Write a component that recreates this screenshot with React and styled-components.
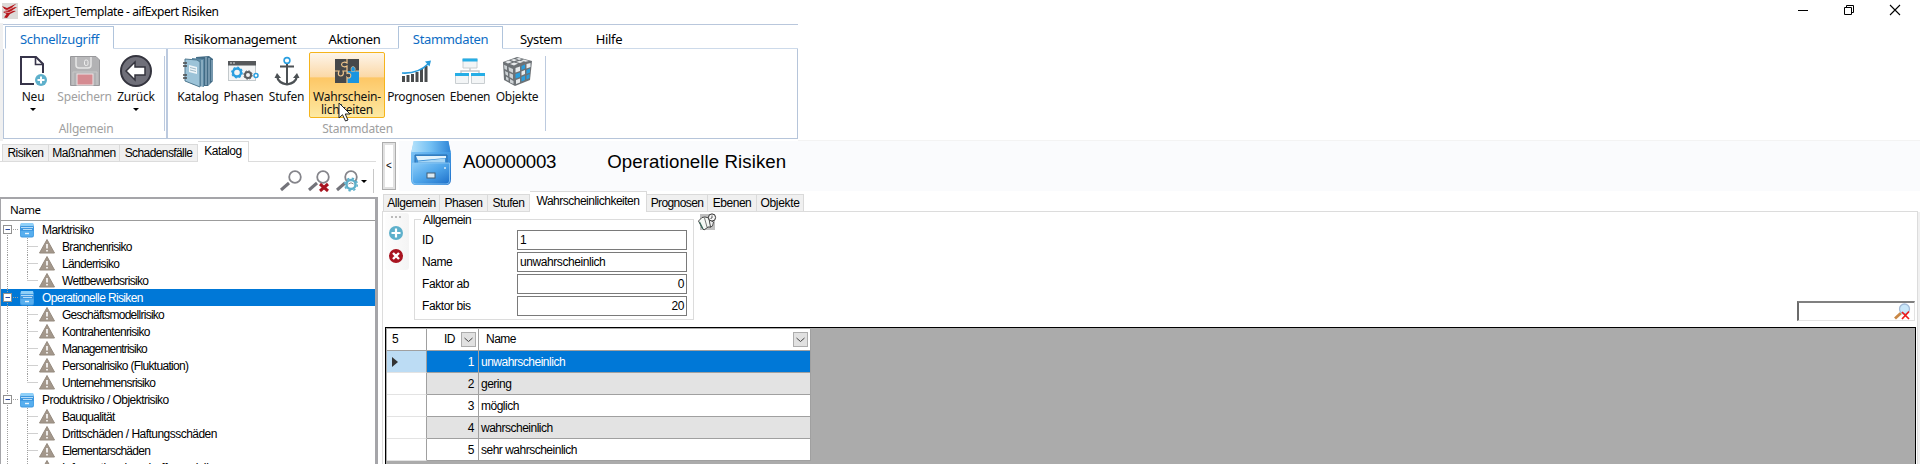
import React from 'react';
import styled, { createGlobalStyle, css } from 'styled-components';

const GlobalStyle = createGlobalStyle`
  * { box-sizing: border-box; }
  body { margin: 0; background: #fff; overflow: hidden; }
  svg { display: block; flex: none; }
`;

const UI = `'Noto Sans', 'Open Sans', sans-serif`;
const CLASSIC = `'Liberation Sans', Arial, sans-serif`;

const Window = styled.div`
  width: 1920px; height: 464px; overflow: hidden;
  display: flex; flex-direction: column;
  background: #fff; color: #000;
  font: 12px/14px ${CLASSIC};
  letter-spacing: -0.5px;
  white-space: nowrap;
`;
const TitleBar = styled.header`
  height: 23px; flex: none; display: flex; align-items: center;
  padding: 0 19px 1px 2px;
  font: 12px/16px ${UI};
`;
const Title = styled.h1`
  margin: 2px auto 0 5px; font: inherit; letter-spacing: -0.42px;
`;
const WindowButtons = styled.div`
  display: flex; gap: 34px; margin-top: -2px;
`;

/* Ribbon */
const Ribbon = styled.section`
  height: 118px; flex: none; width: 798px; position: relative;
  padding-left: 3px; background: linear-gradient(90deg, #f0f0f0 3px, #fff 3px);
  font: 13px/16px ${UI};
`;
const RibbonTabs = styled.nav`
  margin-top: 1px; height: 25px; display: flex; align-items: stretch;
  border-top: 1px solid #b9c7dc;
  padding-left: 2px;
`;
const RibbonTab = styled.div`
  width: ${p => p.$w}px; margin-top: ${p => p.$active ? 1 : 0}px;
  padding-top: ${p => p.$active ? 4 : 6}px;
  text-align: center; letter-spacing: ${p => p.$ls ?? -0.35}px;
  border-bottom: 1px solid #cddaea;
  ${p => p.$grow && css`flex: 1;`}
  ${p => p.$active && css`
    color: #0c6cc4; border: 1px solid #b0c4dc; border-bottom-color: #fff;
  `}
`;
const RibbonBody = styled.div`
  height: 90px; width: 795px; display: flex;
  border: 1px solid #b6c5da; border-top: 0;
`;
const Group = styled.div`
  width: ${p => p.$w}px; position: relative; display: flex; flex-direction: column;
  border-right: ${p => p.$divider ? '2px solid #bccadf' : '0'};
`;
const GroupItems = styled.div`
  display: flex; height: 72px; padding-left: ${p => p.$pl}px;
`;
const GroupLabel = styled.div`
  color: #a0a0a0; text-align: center; font-size: 12px; letter-spacing: -0.2px;
  padding-left: ${p => p.$pl || 0}px;
`;
const GroupRule = styled.i`
  position: absolute; right: 1px; top: 7px; height: 75px; width: 1px; background: #bccadf;
`;
const BigButton = styled.div`
  width: ${p => p.$w}px; height: 66px; margin-top: 3px;
  display: flex; flex-direction: column; align-items: center;
  font-size: 12px; line-height: 13px; text-align: center;
  letter-spacing: ${p => p.$ls ?? -0.2}px;
  color: ${p => p.$disabled ? '#a0a0a0' : '#101010'};
  border: 1px solid transparent;
  ${p => p.$hot && css`
    border-color: #f5b41c; border-radius: 2px;
    background: linear-gradient(#fdf5ea 0, #fbd9a8 37%, #fdc766 39%, #fde9a2 100%);
  `}
`;
const IconBox = styled.div`
  height: 34px; display: flex; align-items: center; justify-content: center; margin: 1px 0 2px;
`;
const Caret = styled.i`
  width: 0; height: 0; margin-top: ${p => p.$mt || 0}px;
  border: 3px solid transparent; border-top: 3px solid #000; border-bottom: 0;
`;
const Pointer = styled.svg`
  position: absolute; left: 338px; top: 79px;
`;

/* Work area */
const Work = styled.main`
  flex: 1; min-height: 0; display: flex; border-top: 1px solid #f3f3f3; margin-top: -1px;
`;
const Side = styled.aside`
  width: 378px; display: flex; flex-direction: column;
`;
const Tabs = styled.nav`
  display: flex; align-items: flex-end; height: 21px; flex: none;
  padding-left: ${p => p.$pl}px; border-bottom: 1px solid #dcdcdc;
  margin-right: 2px;
`;
const Tab = styled.div`
  width: ${p => p.$w}px; height: 17px; text-align: center; line-height: 17px;
  background: #f0f0f0; border: 1px solid #dadada; border-bottom: 0; border-left-width: ${p => p.$first ? 1 : 0}px;
  letter-spacing: ${p => p.$ls ?? -0.45}px;
  ${p => p.$active && css`
    height: 21px; margin-bottom: -1px; background: #fff; line-height: 18px;
  `}
`;
const SideTools = styled.div`
  height: 35px; flex: none; display: flex; align-items: center;
  margin-right: 5px; padding: 3px 0 0 280px; gap: 6px;
`;
const ToolMenu = styled.span`
  display: flex; align-items: center; gap: 6px; margin-left: -3px;
`;
const ToolEnd = styled.i`
  width: 1px; height: 24px; background: #c8c8c8;
`;
const Tree = styled.div`
  flex: 1; min-height: 0; overflow: hidden;
  border: solid #a5a5a9; border-width: 2px 3px 0 1px;
`;
const TreeHead = styled.div`
  height: 22px; padding: 3px 0 0 9px; font: 11.5px/16px ${UI};
  border-bottom: 1px solid #9c9c9c;
`;
const Node = styled.div`
  height: 17px; display: flex; align-items: center;
  background: ${p => p.$selected ? '#0078d7' : 'transparent'};
  color: ${p => p.$selected ? '#fff' : '#000'};
`;
const NodeText = styled.span`
  margin-left: ${p => p.$ml}px; padding-top: 1px; letter-spacing: ${p => p.$ls ?? -0.68}px;
`;

const Detail = styled.section`
  margin-left: 4px; width: 1538px; display: flex; flex-direction: column;
`;
const Header = styled.div`
  height: 50px; flex: none; display: flex;
  background: linear-gradient(90deg, #fff 17px, #fafbfd 17px);
  font: 18.67px/22px ${CLASSIC};
`;
const Collapse = styled.button`
  width: 14px; height: 48px; margin: 1px 15px 0 0; padding: 0;
  border: 1px solid #adadad; outline: 2px solid #e1e1e1; outline-offset: -3px;
  background: #fff; font: 10px/12px ${CLASSIC};
`;
const Heading = styled.h2`
  margin: 10px 0 0 ${p => p.$ml}px; font: inherit; letter-spacing: ${p => p.$ls}px;
`;
const Page = styled.div`
  flex: 1; min-height: 0; display: flex; flex-direction: column;
  margin-right: 2px; border: solid #dcdcdc; border-width: 0 1px;
  box-shadow: 2px 0 #f0f0f0;
`;
const Frame = styled.div`
  flex: 1; min-height: 0; display: flex; flex-direction: column;
`;
const FormArea = styled.div`
  height: 115px; flex: none; display: flex; padding-left: 2px;
`;
const Strip = styled.div`
  width: 24px; height: 57px; margin-top: 1px; border-radius: 3px;
  background: linear-gradient(90deg, #fdfdfd, #f4f4f4);
  display: flex; flex-direction: column; align-items: center; padding: 3px 3px 0 0; gap: 9px;
`;
const Grip = styled.i`
  width: 10px; height: 2px; margin-bottom: -1px;
  background: repeating-linear-gradient(90deg, #bbb 0 2px, transparent 2px 4px);
`;
const GroupBox = styled.fieldset`
  margin: 0 0 0 5px; width: 280px; height: 108px; padding: 4px 6px 0 7px;
  border: 1px solid #dcdcdc; min-width: 0;
`;
const Legend = styled.legend`
  padding: 0 2px 0 2px; margin-left: -1px; height: 14px; line-height: 16px;
`;
const Field = styled.label`
  display: flex; align-items: center; height: 20px; margin-bottom: 2px; letter-spacing: -0.42px;
`;
const FieldName = styled.span`
  flex: 1;
`;
const FieldBox = styled.span`
  width: 170px; height: 20px; border: 1px solid #7a7a7a; background: #fff; line-height: 18px;
  padding: 0 2px; text-align: ${p => p.$num ? 'right' : 'left'};
`;
const Book = styled.div`
  margin: 1px 0 0 4px;
`;
const Search = styled.div`
  margin: 89px 2px 0 auto; width: 118px; height: 20px;
  border: 2px solid #6b6b6b; border-top-color: #808080; border-right: 1px solid #e3e3e3; border-bottom: 1px solid #e3e3e3;
  display: flex; justify-content: flex-end; padding-right: 3px;
`;
const GridArea = styled.div`
  flex: 1; min-height: 0; margin: 0 1px 0 2px; background: #ababab;
  border: solid #000; border-width: 1px 1px 0 1px; padding: 1px 0 0 1px;
`;
const Row = styled.div`
  display: grid; grid-template-columns: 40px 52px 332px; width: 424px; height: 22px; line-height: 23px;
  grid-template-rows: 22px;
  background: ${p => p.$head || !p.$alt ? '#fff' : '#e3e3e3'};
  ${p => p.$selected && css`background: #0078d7; color: #fff;`}
`;
const Cell = styled.div`
  border: solid #a0a0a0; border-width: 0 1px 1px 0; padding: 0 ${p => p.$num ? 4 : 2}px 0 2px;
  text-align: ${p => p.$num ? 'right' : 'left'};
  ${p => p.$head && css`display: flex; align-items: center; padding: 0 2px 0 ${p.$num ? 17 : 7}px; justify-content: space-between;`}
`;
const RowHead = styled.div`
  background: ${p => p.$selected ? '#bcdcf4' : '#fff'};
  border: solid #a0a0a0; border-width: 0 1px 1px 0; border-bottom-color: ${p => p.$head ? '#a0a0a0' : '#e3e3e3'};
  padding-left: 5px; display: flex; align-items: center;
`;
const Filter = styled.span`
  width: 15px; height: 15px; background: #e1e1e1; border: 1px solid #adadad;
  display: flex; align-items: center; justify-content: center;
`;

/* Drawings */
const Logo = () => (
  <svg width="16" height="16" viewBox="0 0 16 16"><rect width="16" height="16" fill="#dcdad8" />
    <path d="M0 3 5 5 14.500 .5 10 4.500 15 4 10 7.500 14 8 8 11 5 15 2 14.500 4.500 11 1 9 4 8Z" fill="#b5161c" />
    <path d="M0 5.500 5 7.500 12 4M3 9 7 9.500 12 7" stroke="#f3dcdc" strokeWidth=".7" fill="none" /></svg>
);
const NewIcon = () => (
  <svg width="29" height="32" viewBox="0 0 29 32"><path d="M24 18V9L17 2H2V29H15" fill="none" stroke="#37344a" strokeWidth="2" />
    <path d="M16.500 2V9.500H24" fill="none" stroke="#37344a" strokeWidth="1.600" />
    <circle cx="22" cy="25" r="6" fill="#5eb0cb" /><path d="M18.500 25H25.500M22 21.500V28.500" stroke="#fff" strokeWidth="2" /></svg>
);
const SaveIcon = () => (
  <svg width="32" height="32" viewBox="0 0 32 32"><path d="M1.500 1.500H27L30.500 5V30.500H1.500Z" fill="#b2b2b4" stroke="#98989b" />
    <path d="M7 2V10Q7 13 10 13H19Q22 13 22 10V2" fill="#b9b9bb" stroke="#e6e6e6" strokeWidth="1.500" />
    <rect x="15.500" y="5" width="3.500" height="5.500" rx="1.500" fill="none" stroke="#eee" />
    <rect x="8" y="19" width="16" height="11" fill="#d58b91" stroke="#ece4e5" /><path d="M4 30V17H28V30" fill="none" stroke="#c8c8c8" /></svg>
);
const BackIcon = () => (
  <svg width="32" height="32" viewBox="0 0 32 32"><circle cx="16" cy="16" r="15" fill="#6f6f79" stroke="#34343e" strokeWidth="2" />
    <path d="M6 16 15 7V12H25V20H15V25Z" fill="#fff" stroke="#34343e" strokeWidth="1.500" /></svg>
);
const BooksIcon = () => (
  <svg width="32" height="33" viewBox="0 0 32 33">
    <path d="M14 2 27 1 31 4V26L26 31 15 31Z" fill="#426b85" />
    <path d="M27 3V30M30 5V26M24 2V30" stroke="#a9c5d6" strokeWidth="1" />
    <path d="M10 3 22 4V32L10 29Z" fill="#5c89a4" /><path d="M20 5V31" stroke="#b5cfdd" /><path d="M3 4 15 5 18 7V32L3 26Z" fill="#9cc3d8" stroke="#507990" />
    <path d="M7 10 15 12V19L7 17Z" fill="#eef5f9" /><path d="M8 12.500 14 14M8 15 14 16.500" stroke="#88a8ba" strokeWidth=".8" />
    <path d="M1 8H5M1 11H5M1 20H5M1 23H5" stroke="#4a4a4a" strokeWidth="1.500" /></svg>
);
const PhasesIcon = () => (
  <svg width="31" height="21" viewBox="0 0 31 21"><rect x=".5" y=".5" width="27" height="19" fill="#f3f5f6" stroke="#c3c9cc" />
    <rect width="28" height="4.500" fill="#55585b" /><path d="M2 2H4M5 2H7" stroke="#ddd" />
    <circle cx="9" cy="11.500" r="4" fill="none" stroke="#2a9fe0" strokeWidth="2.400" /><circle cx="9" cy="11.500" r="5.300" fill="none" stroke="#2a9fe0" strokeWidth="1.200" strokeDasharray="2 2.100" />
    <circle cx="20" cy="14" r="3" fill="none" stroke="#5a5d60" strokeWidth="2" /><circle cx="20" cy="14" r="4.200" fill="none" stroke="#5a5d60" strokeDasharray="1.700 1.600" />
    <circle cx="28" cy="14.500" r="2" fill="#fff" stroke="#2a9fe0" strokeWidth="1.500" /></svg>
);
const AnchorIcon = () => (
  <svg width="26" height="31" viewBox="0 0 26 31" fill="none"><circle cx="13" cy="4.500" r="2.900" stroke="#2a9fe0" strokeWidth="1.600" />
    <path d="M13 8V28M6 10.500H20" stroke="#4c5155" strokeWidth="2" /><path d="M3 20Q4 27 13 28.500Q22 27 23 20" stroke="#4c5155" strokeWidth="2.200" />
    <path d="M.5 22 3 17 7 22ZM25.500 22 23 17 19 22Z" fill="#4c5155" /></svg>
);
const PuzzleIcon = () => (
  <svg width="26" height="26" viewBox="0 0 26 26"><path d="M1 1H25V25H1Z" fill="#46484a" /><path d="M13 13H25V25H13Z" fill="#1b95e0" />
    <path d="M13 1V5C11.500 4 8 3.500 7.500 6.500C8 9.500 11.500 9 13 8V13H9C10 16 9 18 6.500 18C4 18 4 15.500 5 13H1M13 18V25M21.500 13H25" fill="none" stroke="#f0c58c" strokeWidth="1.200" />
    <path d="M13 13V15.500C15.500 14.500 17 16 16.800 18C16.500 20 14.500 20.500 13 19.500" fill="#46484a" stroke="#f0c58c" strokeWidth="1.100" />
    <path d="M17.500 13.500C16.500 11 17 8.500 19 8.500C21 8.500 22 11 20.700 13.500Z" fill="#1b95e0" stroke="#f0c58c" strokeWidth=".6" /></svg>
);
const ForecastIcon = () => (
  <svg width="31" height="23" viewBox="0 0 31 23"><path d="M2.500 22V16M7 22V15M11.500 22V14M16 22V12M20.500 22V9M25 22V6" stroke="#484b4d" strokeWidth="3" />
    <path d="M1 13Q17 14 27 4" fill="none" stroke="#279bdc" strokeWidth="1.600" /><path d="M24 1.500 30 .5 28.500 6.500Z" fill="#279bdc" /></svg>
);
const LevelsIcon = () => (
  <svg width="30" height="27" viewBox="0 0 30 27"><path d="M15 10V13M6 16V13H24V16" fill="none" stroke="#c3c9cd" strokeWidth="1.500" />
    <path d="M8 1H22V10H8ZM.5 16H13.500V25.500H.5ZM16.500 16H29.500V25.500H16.500Z" fill="#f3f5f6" stroke="#c9ced1" />
    <path d="M7.500 .5H22.500V3.500H7.500ZM0 15H14V18H0ZM16 15H30V18H16Z" fill="#26aee6" /></svg>
);
const CubeIcon = () => (
  <svg width="31" height="31" viewBox="0 0 31 31"><path d="M1 6 15 1 30 5 28 24 13 30 2 24Z" fill="#6d7276" />
    <path d="M3 6 7 4.500 10 6 6 7.500ZM8.500 4 12 3 15.500 4 12 5.300ZM14 2.500 17 2 20 3 17 4ZM8 8 12 6.500 16 7.500 12 9.500ZM14 6 17.500 4.700 22 5.500 18 7ZM19 4.300 22 3.500 27 5 23.500 5.700Z" fill="#e6e9eb" />
    <path d="M2 9 5 10V14L2.500 13ZM6.500 11 11 13V17L7 15ZM3 15 6 16.500V20L3.500 18.500ZM7.500 17 11 18.500V23L7.500 21ZM4 20.500 6.500 22V25L4 23.500ZM8 23 11.500 25V28L8 26.500Z" fill="#cdd2d5" />
    <path d="M13.500 12 18 10.500V15L13.500 16.500ZM24.500 8 28.500 7V11L24.500 12.500ZM19.500 15.500 23 14V18L19.500 19.500ZM14 24 18 22.500V26.500L14 28Z" fill="#e8ebed" />
    <path d="M19.500 10 23 8.500V12.500L19.500 14ZM13.500 18 18 16.500V21L13.500 22.500ZM24.500 14 28 12.500V16.500L24.500 18ZM19.500 21 23 19.500V24L19.500 25.500ZM24.500 19.500 27.500 18V22L24.500 23.500Z" fill="#2a9edd" /></svg>
);
const Lens = ({ kind }) => (
  <svg width="22" height="22" viewBox="0 0 22 22"><path d="M1 20 9 13" stroke="#73737a" strokeWidth="3" />
    <circle cx="15" cy="7" r="5.800" fill="#fff" stroke="#85858b" strokeWidth="1.800" />
    {kind === 'clear' && <path d="M12 14 20 21M20 14 12 21" stroke="#a81420" strokeWidth="3" />}
    {kind === 'options' && <g fill="none" stroke="#5eb0cb"><circle cx="15" cy="14.500" r="4.500" strokeWidth="2.500" fill="#fff" /><circle cx="15" cy="14.500" r="6.300" strokeWidth="1.500" strokeDasharray="2.400 2.550" /><path d="M12.500 14Q15 11.500 17.500 14" stroke="#85858b" /></g>}
  </svg>
);
const Cabinet = () => (
  <svg width="40" height="45" viewBox="0 0 40 45">
    <defs>
      <linearGradient id="cabBody" x1="0" x2="1" y1="0" y2="1"><stop offset="0" stopColor="#8dcdf9" /><stop offset=".5" stopColor="#4ea5ea" /><stop offset="1" stopColor="#1d6fc9" /></linearGradient>
      <linearGradient id="cabTop" x1="0" x2="1"><stop offset="0" stopColor="#b5e2fb" /><stop offset=".5" stopColor="#72bff3" /><stop offset="1" stopColor="#2f86d8" /></linearGradient>
    </defs>
    <path d="M3 0H37L40 12V38Q40 44 35 44H5Q0 44 0 38V12Z" fill="url(#cabBody)" />
    <path d="M2.500 0H37.500L39.500 11H.5Z" fill="url(#cabTop)" />
    <path d="M4 14H36V23H4Z" fill="#3a8fd6" stroke="#2a6fae" /><path d="M5 15H35V17L7 19.500Z" fill="#e3f3fc" /><path d="M7 20.500 34 17.500V21.500H7Z" fill="#a6d5f4" />
    <path d="M1.500 22H38.500V40Q38.500 43 35 43H5Q1.500 43 1.500 40Z" fill="url(#cabBody)" stroke="#8fcaf5" strokeWidth=".8" />
    <rect x="16" y="32" width="8" height="5" fill="#dbe9f2" stroke="#445e74" /><circle cx="34" cy="27" r="1" fill="#d7edf9" />
  </svg>
);
const SmallCabinet = () => (
  <svg width="14" height="16" viewBox="0 0 14 16"><path d="M1 1H13L14 5V13Q14 15.500 12 15.500H2Q0 15.500 0 13V5Z" fill="#3f98e0" />
    <path d="M1 1H13L13.500 4H.5Z" fill="#8fd0f8" /><path d="M1 5.500H13M3 7.500H12" stroke="#b5dcf8" /><path d="M0.500 9H13.500V13Q13 14.500 11 14.500H3Q1 14.500 .5 13Z" fill="#57aeee" /><path d="M5 11.500H9" stroke="#e8f5fd" strokeWidth="1.400" /></svg>
);
const Warn = () => (
  <svg width="16" height="15" viewBox="0 0 16 15"><path d="M8 .5 15.500 14H.5Z" fill="#a3978b" stroke="#958a7f" strokeLinejoin="round" /><path d="M8 5V9.500M8 11V12.500" stroke="#fff" strokeWidth="1.600" /></svg>
);
const Branch = ({ child, first, last }) => (
  <svg width={child ? 38 : 19} height="17" viewBox={`0 0 ${child ? 38 : 19} 17`}>
    <g stroke="#a0a0a0" strokeDasharray="1 1" fill="none">
      {child ? <><path d="M6.500 0V17" /><path d={`M26.500 0V${last ? 8 : 17}M26.500 8.500H37`} /></>
        : <><path d={`M6.500 ${first ? 8 : 0}V17M12 8.500H18`} /></>}
    </g>
    {!child && <><rect x="2.500" y="4.500" width="8" height="8" fill="#fff" stroke="#919191" /><path d="M4.500 8.500H9" stroke="#2a4aa0" /></>}
  </svg>
);
const AddIcon = () => (
  <svg width="14" height="14" viewBox="0 0 14 14"><circle cx="7" cy="7" r="7" fill="#5eb0cb" /><path d="M2.500 7H11.500M7 2.500V11.500" stroke="#fff" strokeWidth="2.200" /></svg>
);
const RemoveIcon = () => (
  <svg width="14" height="14" viewBox="0 0 14 14"><circle cx="7" cy="7" r="7" fill="#a81420" /><path d="M4 4 10 10M10 4 4 10" stroke="#fff" strokeWidth="2.400" /></svg>
);
const BookIcon = () => (
  <svg width="19" height="18" viewBox="0 0 19 18"><path d="M2 1H17V17H2Z" fill="#c0c0c0" /><path d="M.5 8 4 4.500 7 4 11 5 13 14 10 14 6 17 4.500 15.500Z" fill="#f5f8f5" stroke="#333" strokeWidth=".9" /><path d="M6.500 5 9 14" stroke="#555" strokeWidth=".8" /><path d="M1.500 9 5 16" stroke="#3d6b5d" strokeWidth="1.300" />
    <path d="M11 6 15.500 9 14.500 13 12.500 14Z" fill="#eee" stroke="#333" strokeWidth=".8" /><circle cx="14" cy="4.500" r="3.600" fill="#f4f4f4" stroke="#333" /><path d="M14 2.500V5L12.500 5.500" fill="none" stroke="#333" strokeWidth=".8" /></svg>
);
const FindIcon = () => (
  <svg width="17" height="17" viewBox="0 0 17 17"><path d="M1 15.500 7 10" stroke="#c98745" strokeWidth="2.800" /><circle cx="10.500" cy="6" r="5" fill="#c9e7fa" stroke="#a3bbd8" strokeWidth="1.300" /><path d="M8 9 15 16M15 8.500 8 16" stroke="#ee1c1c" strokeWidth="1.700" /></svg>
);

const nodes = [
  { t: 'Marktrisiko', root: true, first: true, ls: -0.58 },
  { t: 'Branchenrisiko' }, { t: 'Länderrisiko' }, { t: 'Wettbewerbsrisiko', last: true },
  { t: 'Operationelle Risiken', root: true, selected: true, ls: -0.63 },
  { t: 'Geschäftsmodellrisiko', ls: -0.73 }, { t: 'Kontrahentenrisiko' }, { t: 'Managementrisiko', ls: -0.82 },
  { t: 'Personalrisiko (Fluktuation)', ls: -0.68 }, { t: 'Unternehmensrisiko', ls: -0.75 },
  { t: 'Produktrisiko / Objektrisiko', root: true, ls: -0.55 },
  { t: 'Bauqualität' }, { t: 'Drittschäden / Haftungsschäden', ls: -0.53 }, { t: 'Elementarschäden', ls: -0.75 },
  { t: 'Informationsbeschaffungsrisiken', ls: -0.3 },
];
nodes[9].last = true;
const rows = ['unwahrscheinlich', 'gering', 'möglich', 'wahrscheinlich', 'sehr wahrscheinlich'];
const fields = [['ID', '1'], ['Name', 'unwahrscheinlich'], ['Faktor ab', '0', true], ['Faktor bis', '20', true]];

const FilterButton = () => (
  <Filter><svg width="9" height="6" viewBox="0 0 9 6"><path d="M.5 1 4.500 4.500 8.500 1" fill="none" stroke="#444" /></svg></Filter>
);
const Command = ({ icon, children, ...rest }) => (
  <BigButton {...rest}><IconBox>{icon}</IconBox>{children}</BigButton>
);

export default function App() {
  return (
    <Window>
      <GlobalStyle />
      <TitleBar>
        <Logo /><Title>aifExpert_Template - aifExpert Risiken</Title>
        <WindowButtons>
          <svg width="12" height="12" viewBox="0 0 12 12"><path d="M1 6.500H11" stroke="#000" /></svg>
          <svg width="12" height="12" viewBox="0 0 12 12" fill="none" stroke="#000"><path d="M1.500 3.500H8.500V10.500H1.500ZM3.500 3V1.500H10.500V8.500H9" /></svg>
          <svg width="12" height="12" viewBox="0 0 12 12"><path d="M1 1 11 11M11 1 1 11" stroke="#000" strokeWidth="1.100" /></svg>
        </WindowButtons>
      </TitleBar>

      <Ribbon>
        <RibbonTabs>
          <RibbonTab $w={109} $active $ls={-0.3}>Schnellzugriff</RibbonTab>
          <RibbonTab $w={38} />
          <RibbonTab $w={176}>Risikomanagement</RibbonTab>
          <RibbonTab $w={53}>Aktionen</RibbonTab>
          <RibbonTab $w={17} />
          <RibbonTab $w={105} $active>Stammdaten</RibbonTab>
          <RibbonTab $w={76}>System</RibbonTab>
          <RibbonTab $w={60}>Hilfe</RibbonTab>
          <RibbonTab $grow />
        </RibbonTabs>
        <RibbonBody>
          <Group $w={164} $divider>
            <GroupItems $pl={4}>
              <Command $w={50} icon={<NewIcon />}>Neu<Caret $mt={5} /></Command>
              <Command $w={53} $disabled icon={<SaveIcon />}>Speichern</Command>
              <Command $w={50} icon={<BackIcon />}>Zurück<Caret $mt={5} /></Command>
            </GroupItems>
            <GroupLabel $pl={2}>Allgemein</GroupLabel>
            <GroupRule />
          </Group>
          <Group $w={379}>
            <GroupItems $pl={5}>
              <Command $w={50} icon={<BooksIcon />}>Katalog</Command>
              <Command $w={41} icon={<PhasesIcon />}>Phasen</Command>
              <Command $w={45} icon={<AnchorIcon />}>Stufen</Command>
              <Command $w={76} $hot icon={<PuzzleIcon />}>Wahrschein-<br />lichkeiten</Command>
              <Command $w={62} $ls={-0.4} icon={<ForecastIcon />}>Prognosen</Command>
              <Command $w={46} $ls={-0.35} icon={<LevelsIcon />}>Ebenen</Command>
              <Command $w={48} icon={<CubeIcon />}>Objekte</Command>
            </GroupItems>
            <GroupLabel>Stammdaten</GroupLabel>
            <GroupRule />
          </Group>
        </RibbonBody>
        <Pointer width="14" height="20" viewBox="0 0 14 20"><path d="M1 1V16L4.500 12.700 7.500 19 10 18 7.200 12H12Z" fill="#fff" stroke="#222" /></Pointer>
      </Ribbon>

      <Work>
        <Side>
          <Tabs $pl={2}>
            <Tab $w={47} $first>Risiken</Tab><Tab $w={71}>Maßnahmen</Tab><Tab $w={78} $ls={-0.6}>Schadensfälle</Tab><Tab $w={51} $active>Katalog</Tab>
          </Tabs>
          <SideTools><Lens /><Lens kind="clear" /><Lens kind="options" /><ToolMenu><Caret /><ToolEnd /></ToolMenu></SideTools>
          <Tree>
            <TreeHead>Name</TreeHead>
            {nodes.map(n => (
              <Node key={n.t} $selected={n.selected}>
                <Branch child={!n.root} first={n.first} last={n.last} />
                {n.root ? <SmallCabinet /> : <Warn />}
                <NodeText $ml={n.root ? 8 : 7} $ls={n.ls}>{n.t}</NodeText>
              </Node>
            ))}
          </Tree>
        </Side>

        <Detail>
          <Header>
            <Collapse>&lt;</Collapse>
            <Cabinet />
            <Heading $ml={12} $ls={-0.25}>A00000003</Heading>
            <Heading $ml={51} $ls={0.08}>Operationelle Risiken</Heading>
          </Header>
          <Frame>
            <Tabs $pl={1}>
              <Tab $w={57} $first>Allgemein</Tab><Tab $w={48}>Phasen</Tab><Tab $w={42}>Stufen</Tab>
              <Tab $w={117} $active $ls={-0.5}>Wahrscheinlichkeiten</Tab>
              <Tab $w={61} $ls={-0.6}>Prognosen</Tab><Tab $w={49}>Ebenen</Tab><Tab $w={47} $ls={-0.35}>Objekte</Tab>
            </Tabs>
            <Page>
              <FormArea>
                <Strip><Grip /><AddIcon /><RemoveIcon /></Strip>
                <GroupBox>
                  <Legend>Allgemein</Legend>
                  {fields.map(([name, value, num]) => (
                    <Field key={name}><FieldName>{name}</FieldName><FieldBox $num={num}>{value}</FieldBox></Field>
                  ))}
                </GroupBox>
                <Book><BookIcon /></Book>
                <Search><FindIcon /></Search>
              </FormArea>
              <GridArea>
                <Row $head>
                  <RowHead $head>5</RowHead>
                  <Cell $head $num>ID<FilterButton /></Cell>
                  <Cell $head>Name<FilterButton /></Cell>
                </Row>
                {rows.map((name, i) => (
                  <Row key={name} $selected={i === 0} $alt={i % 2 === 1}>
                    <RowHead $selected={i === 0}>{i === 0 && <svg width="6" height="10" viewBox="0 0 6 10"><path d="M0 0 6 5 0 10Z" fill="#333" /></svg>}</RowHead>
                    <Cell $num>{i + 1}</Cell><Cell>{name}</Cell>
                  </Row>
                ))}
              </GridArea>
            </Page>
          </Frame>
        </Detail>
      </Work>
    </Window>
  );
}
